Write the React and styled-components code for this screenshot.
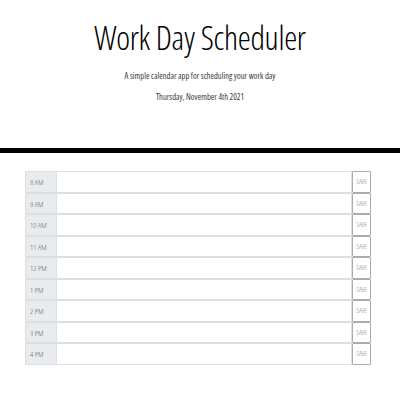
import React from "react";
import styled, { createGlobalStyle } from "styled-components";

const Global = createGlobalStyle`
  html, body { margin: 0; padding: 0; background: #ffffff; }
  body { font-family: "Open Sans", "Liberation Sans", sans-serif; color: #212529; }
`;

const Page = styled.div`
  width: 400px;
  height: 400px;
  overflow: hidden;
`;

const Header = styled.header`
  display: flex;
  flex-direction: column;
  align-items: center;
  padding-top: 18px;
  height: 130px;
  border-bottom: 5px solid #000;
`;

const Title = styled.h1`
  margin: 0;
  font-weight: 300;
  font-size: 33px;
  line-height: 40px;
  font-stretch: 75%;
  color: #000;
  letter-spacing: -0.3px;
`;

const Lead = styled.p`
  margin: 12px 0 0;
  font-size: 8.5px;
  line-height: 12px;
  font-weight: 400;
  font-stretch: 75%;
  color: #3a3a3a;
`;

const DateLine = styled.p`
  margin: 8.5px 0 0;
  font-size: 8.5px;
  line-height: 12px;
  font-weight: 400;
  font-stretch: 75%;
  color: #3a3a3a;
`;

const Schedule = styled.div`
  margin: 18px 0 0 25px;
  width: 346px;
  display: flex;
  flex-direction: column;
`;

const Row = styled.div`
  display: flex;
  height: 21.5px;
  box-sizing: border-box;
`;

const Hour = styled.div`
  width: 32px;
  box-sizing: border-box;
  background: #e9ecef;
  border: 1px solid #dcdfe3;
  display: flex;
  align-items: center;
  padding-left: 4px;
  font-size: 8px;
  font-weight: 300;
  font-stretch: 75%;
  color: #60666c;
`;

const Entry = styled.div`
  flex: 1;
  box-sizing: border-box;
  border: 1px solid #dcdfe3;
  border-left: none;
  background: #fff;
`;

const SaveBtn = styled.button`
  width: 19px;
  box-sizing: border-box;
  margin: 0;
  padding: 0;
  background: #fff;
  border: 1px solid #a9acb0;
  border-radius: 1px;
  font-family: "Open Sans", "Liberation Sans", sans-serif;
  font-size: 6.5px;
  font-weight: 300;
  font-stretch: 75%;
  color: #7d8288;
  cursor: pointer;
`;

const hours = ["8 AM", "9 AM", "10 AM", "11 AM", "12 PM", "1 PM", "2 PM", "3 PM", "4 PM"];

export default function App() {
  return (
    <Page>
      <Global />
      <Header>
        <Title>Work Day Scheduler</Title>
        <Lead>A simple calendar app for scheduling your work day</Lead>
        <DateLine>Thursday, November 4th 2021</DateLine>
      </Header>
      <Schedule>
        {hours.map((h) => (
          <Row key={h}>
            <Hour>{h}</Hour>
            <Entry />
            <SaveBtn>SAVE</SaveBtn>
          </Row>
        ))}
      </Schedule>
    </Page>
  );
}
